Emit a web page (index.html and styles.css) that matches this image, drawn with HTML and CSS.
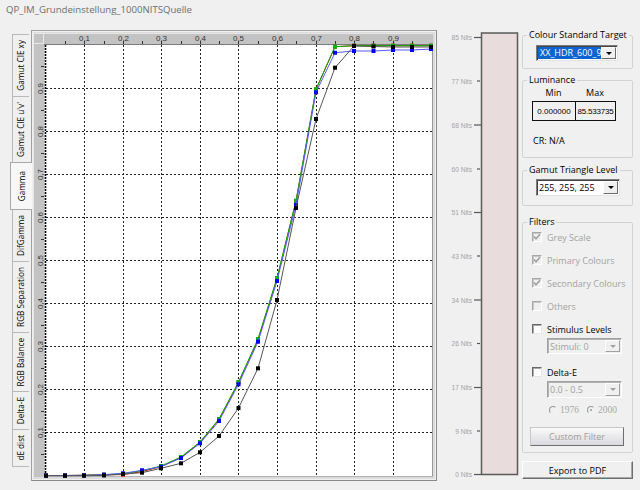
FILE: index.html
```html
<!DOCTYPE html>
<html>
<head>
<meta charset="utf-8">
<link rel="stylesheet" href="styles.css">
</head>
<body>
<div class="title">QP_IM_Grundeinstellung_1000NITSQuelle</div>
<div class="main">
  <div class="tabs">
    <div class="tab"><span>Gamut CIE xy</span></div>
    <div class="tab"><span>Gamut CIE u'v'</span></div>
    <div class="tab active"><span>Gamma</span></div>
    <div class="tab"><span>DifGamma</span></div>
    <div class="tab"><span>RGB Separation</span></div>
    <div class="tab"><span>RGB Balance</span></div>
    <div class="tab"><span>Delta-E</span></div>
    <div class="tab"><span>dE dist</span></div>
  </div>

  <div class="chart-page">
    <svg class="chart" width="402" height="447" viewBox="0 0 402 447">
      <defs>
        <marker id="mb" markerUnits="userSpaceOnUse" markerWidth="6" markerHeight="6" refX="3" refY="3"><rect x="1" y="1" width="4" height="4" fill="#0000ff"/></marker>
        <marker id="mg" markerUnits="userSpaceOnUse" markerWidth="6" markerHeight="6" refX="3" refY="3"><rect x="1" y="1" width="4" height="4" fill="#00b400"/></marker>
        <marker id="mr" markerUnits="userSpaceOnUse" markerWidth="6" markerHeight="6" refX="3" refY="3"><rect x="1" y="1" width="4" height="4" fill="#e00000"/></marker>
        <marker id="mk" markerUnits="userSpaceOnUse" markerWidth="6" markerHeight="6" refX="3" refY="3"><rect x="1" y="1" width="4" height="4" fill="#000"/></marker>
      </defs>
      <g transform="translate(-33,-32)">
        <rect x="33" y="32" width="402" height="447" fill="#dcdcdc"/>
        <!-- rulers -->
        <rect x="33" y="33" width="400" height="11" fill="#c3c3c3"/>
        <rect x="33" y="33" width="11" height="444" fill="#c3c3c3"/>
        <rect x="33.5" y="33.5" width="10" height="10" fill="none" stroke="#e8e8e8"/>
        <line x1="44" y1="33.5" x2="433" y2="33.5" stroke="#e6e6e6"/>
        <line x1="33.5" y1="44" x2="33.5" y2="477" stroke="#e6e6e6"/>
        <!-- plot -->
        <rect x="45" y="44" width="387" height="432" fill="#fff"/>
        <line x1="44" y1="44.5" x2="433" y2="44.5" stroke="#7a7a7a"/>
        <line x1="432.5" y1="44" x2="432.5" y2="477" stroke="#9a9a9a"/>
        <line x1="44" y1="476.5" x2="433" y2="476.5" stroke="#b4b4b4"/>

        <g class="tick" stroke="#333" stroke-width="1">
          <line x1="65.5" y1="41" x2="65.5" y2="44"/>
          <line x1="104.5" y1="41" x2="104.5" y2="44"/>
          <line x1="142.5" y1="41" x2="142.5" y2="44"/>
          <line x1="181.5" y1="41" x2="181.5" y2="44"/>
          <line x1="219.5" y1="41" x2="219.5" y2="44"/>
          <line x1="258.5" y1="41" x2="258.5" y2="44"/>
          <line x1="296.5" y1="41" x2="296.5" y2="44"/>
          <line x1="335.5" y1="41" x2="335.5" y2="44"/>
          <line x1="373.5" y1="41" x2="373.5" y2="44"/>
          <line x1="412.5" y1="41" x2="412.5" y2="44"/>
          <line x1="84.5" y1="41" x2="84.5" y2="44"/>
          <line x1="123.5" y1="41" x2="123.5" y2="44"/>
          <line x1="161.5" y1="41" x2="161.5" y2="44"/>
          <line x1="200.5" y1="41" x2="200.5" y2="44"/>
          <line x1="238.5" y1="41" x2="238.5" y2="44"/>
          <line x1="277.5" y1="41" x2="277.5" y2="44"/>
          <line x1="316.5" y1="41" x2="316.5" y2="44"/>
          <line x1="354.5" y1="41" x2="354.5" y2="44"/>
          <line x1="393.5" y1="41" x2="393.5" y2="44"/>

          <line x1="41" y1="454.5" x2="44" y2="454.5"/>
          <line x1="41" y1="411.5" x2="44" y2="411.5"/>
          <line x1="41" y1="368.5" x2="44" y2="368.5"/>
          <line x1="41" y1="325.5" x2="44" y2="325.5"/>
          <line x1="41" y1="282.5" x2="44" y2="282.5"/>
          <line x1="41" y1="239.5" x2="44" y2="239.5"/>
          <line x1="41" y1="196.5" x2="44" y2="196.5"/>
          <line x1="41" y1="153.5" x2="44" y2="153.5"/>
          <line x1="41" y1="110.5" x2="44" y2="110.5"/>
          <line x1="41" y1="66.5" x2="44" y2="66.5"/>
        </g>

        <g class="rlabel">
          <text x="84.5" y="41">0,1</text>
          <text x="123.5" y="41">0,2</text>
          <text x="161.5" y="41">0,3</text>
          <text x="200.5" y="41">0,4</text>
          <text x="238.5" y="41">0,5</text>
          <text x="277.5" y="41">0,6</text>
          <text x="316.5" y="41">0,7</text>
          <text x="354.5" y="41">0,8</text>
          <text x="393.5" y="41">0,9</text>
          <text transform="translate(42.5,88.5) rotate(-90)">0,9</text>
          <text transform="translate(42.5,131.5) rotate(-90)">0,8</text>
          <text transform="translate(42.5,174.5) rotate(-90)">0,7</text>
          <text transform="translate(42.5,217.5) rotate(-90)">0,6</text>
          <text transform="translate(42.5,260.5) rotate(-90)">0,5</text>
          <text transform="translate(42.5,303.5) rotate(-90)">0,4</text>
          <text transform="translate(42.5,346.5) rotate(-90)">0,3</text>
          <text transform="translate(42.5,389.5) rotate(-90)">0,2</text>
          <text transform="translate(42.5,432.5) rotate(-90)">0,1</text>
        </g>

        <g class="grid" stroke="#222" stroke-width="1" stroke-dasharray="2 2">
          <line x1="84.5" y1="45" x2="84.5" y2="476"/>
          <line x1="123.5" y1="45" x2="123.5" y2="476"/>
          <line x1="161.5" y1="45" x2="161.5" y2="476"/>
          <line x1="200.5" y1="45" x2="200.5" y2="476"/>
          <line x1="238.5" y1="45" x2="238.5" y2="476"/>
          <line x1="277.5" y1="45" x2="277.5" y2="476"/>
          <line x1="316.5" y1="45" x2="316.5" y2="476"/>
          <line x1="354.5" y1="45" x2="354.5" y2="476"/>
          <line x1="393.5" y1="45" x2="393.5" y2="476"/>
          <line x1="46" y1="88.5" x2="432" y2="88.5"/>
          <line x1="46" y1="131.5" x2="432" y2="131.5"/>
          <line x1="46" y1="174.5" x2="432" y2="174.5"/>
          <line x1="46" y1="217.5" x2="432" y2="217.5"/>
          <line x1="46" y1="260.5" x2="432" y2="260.5"/>
          <line x1="46" y1="303.5" x2="432" y2="303.5"/>
          <line x1="46" y1="346.5" x2="432" y2="346.5"/>
          <line x1="46" y1="389.5" x2="432" y2="389.5"/>
          <line x1="46" y1="432.5" x2="432" y2="432.5"/>
        </g>
        <line x1="45.5" y1="45" x2="45.5" y2="476" stroke="#000" stroke-width="1.6" stroke-dasharray="2 1"/>

        <polyline class="curve" stroke="#e00000" marker-start="url(#mr)" marker-mid="url(#mr)" marker-end="url(#mr)"
          points="46,475.5 65,475.5 84,475.3 104,474.7 123,474.6 142,471.6 161,466.6 181,457.5 200,442.5 219,419.5 238.5,382.5 258,339.5 277,278.5 296,201 316,89.5 335,46.7 354,45.7 373.5,45.7 393,45.7 412,45.7 431,45.7"/>
        <polyline class="curve" stroke="#00b400" marker-start="url(#mg)" marker-mid="url(#mg)" marker-end="url(#mg)"
          points="46,475.5 65,475.5 84,475.3 104,474.7 123,473.8 142,470.8 161,466 181,457 200,442 219,419 238.5,382 258,339 277,278 296,200.7 316,89.3 335,46.7 354,45.7 373.5,45.7 393,45.7 412,45.7 431,45.7"/>
        <polyline class="curve" stroke="#5a5aff" marker-start="url(#mb)" marker-mid="url(#mb)" marker-end="url(#mb)"
          points="46,475.5 65,475.5 84,475.3 104,474.7 123,473.3 142,470.3 161,466.7 181,458 200,443.3 219,421 238.5,384.3 258,341.7 277,281 296,205 316,92.3 335,52.7 354,51 373.5,51 393,50 412,50 431,49"/>
        <polyline class="curve" stroke="#555" marker-start="url(#mk)" marker-mid="url(#mk)" marker-end="url(#mk)"
          points="46,475.7 65,475.7 84,475.7 104,475.5 123,474 142,472.7 161,468.3 181,463.3 200,452.3 219,436 238.5,408 258,368.3 277,300 296,208 316,119 335,67.7 354,46 373.5,46.5 393,47 412,47 431,47"/>
      </g>
    </svg>
  </div>

  <div class="nits">
    <svg width="83" height="450" viewBox="0 0 83 450">
      <g transform="translate(-437,-30)">
        <rect x="481.5" y="34" width="36" height="441.5" fill="#e8dcdc" stroke="#5a5a5a" stroke-width="1.5"/>
        <g stroke="#555" stroke-width="1.2">
          <line x1="474" y1="38.5" x2="481" y2="38.5"/>
          <line x1="477" y1="82" x2="480" y2="82"/>
          <line x1="474" y1="126" x2="481" y2="126"/>
          <line x1="477" y1="170" x2="480" y2="170"/>
          <line x1="474" y1="213.5" x2="481" y2="213.5"/>
          <line x1="477" y1="257" x2="480" y2="257"/>
          <line x1="474" y1="301" x2="481" y2="301"/>
          <line x1="477" y1="344.5" x2="480" y2="344.5"/>
          <line x1="474" y1="388.5" x2="481" y2="388.5"/>
          <line x1="477" y1="432" x2="480" y2="432"/>
          <line x1="474" y1="475.5" x2="481" y2="475.5"/>
        </g>
        <g class="nlabel">
          <text x="472" y="41">85 Nits</text>
          <text x="472" y="84.5">77 Nits</text>
          <text x="472" y="128.5">68 Nits</text>
          <text x="472" y="172.5">60 Nits</text>
          <text x="472" y="216">51 Nits</text>
          <text x="472" y="259.5">43 Nits</text>
          <text x="472" y="303.5">34 Nits</text>
          <text x="472" y="347">26 Nits</text>
          <text x="472" y="391">17 Nits</text>
          <text x="472" y="434.5">9 Nits</text>
          <text x="472" y="478">0 Nits</text>
        </g>
      </g>
    </svg>
  </div>

  <div class="side">
    <fieldset class="group g1">
      <legend>Colour Standard Target</legend>
      <div class="combo combo-target">
        <div class="combo-text"><span class="sel">XX_HDR_600_90</span></div>
        <div class="combo-btn"><span class="arrow"></span></div>
      </div>
    </fieldset>

    <fieldset class="group g2">
      <legend>Luminance</legend>
      <div class="lum-head"><span>Min</span><span>Max</span></div>
      <div class="lum-table"><span>0.000000</span><span>85.533735</span></div>
      <div class="cr">CR: N/A</div>
    </fieldset>

    <fieldset class="group g3">
      <legend>Gamut Triangle Level</legend>
      <div class="combo combo-level">
        <div class="combo-text">255, 255, 255</div>
        <div class="combo-btn"><span class="arrow"></span></div>
      </div>
    </fieldset>

    <fieldset class="group g4">
      <legend>Filters</legend>
      <div class="check disabled checked"><span class="box"><svg width="8" height="8" viewBox="0 0 8 8"><path d="M1 3.5 L3 5.8 L7 1.2" fill="none" stroke="#a0a0a0" stroke-width="1.6"/></svg></span>Grey Scale</div>
      <div class="check disabled checked"><span class="box"><svg width="8" height="8" viewBox="0 0 8 8"><path d="M1 3.5 L3 5.8 L7 1.2" fill="none" stroke="#a0a0a0" stroke-width="1.6"/></svg></span>Primary Colours</div>
      <div class="check disabled checked"><span class="box"><svg width="8" height="8" viewBox="0 0 8 8"><path d="M1 3.5 L3 5.8 L7 1.2" fill="none" stroke="#a0a0a0" stroke-width="1.6"/></svg></span>Secondary Colours</div>
      <div class="check disabled"><span class="box"></span>Others</div>
      <div class="check"><span class="box"></span>Stimulus Levels</div>
      <div class="combo combo-sub disabled">
        <div class="combo-text">Stimuli: 0</div>
        <div class="combo-btn"><span class="arrow"></span></div>
      </div>
      <div class="check check-de"><span class="box"></span>Delta-E</div>
      <div class="combo combo-sub combo-de disabled">
        <div class="combo-text">0.0 - 0.5</div>
        <div class="combo-btn"><span class="arrow"></span></div>
      </div>
      <div class="radios">
        <span class="radio"><span class="dot"></span>1976</span>
        <span class="radio"><span class="dot on"></span>2000</span>
      </div>
      <button class="btn btn-custom" type="button">Custom Filter</button>
    </fieldset>

    <button class="btn btn-export" type="button">Export to PDF</button>
  </div>
</div>
</body>
</html>
```

FILE: styles.css
```css
html, body {
  margin: 0;
  padding: 0;
}
body {
  width: 640px;
  height: 490px;
  overflow: hidden;
  background: #f0f0f0;
  font-family: "Open Sans", "Liberation Sans", sans-serif;
  font-size: 9px;
  color: #000;
}
.title {
  height: 29px;
  padding-left: 6px;
  line-height: 19px;
  font-size: 9.6px;
  color: #6e6e6e;
}
.main {
  display: flex;
  align-items: flex-start;
}

/* vertical tabs */
.tabs {
  width: 21px;
  margin-left: 10px;
  margin-top: 6px;
  display: flex;
  flex-direction: column;
}
.tab {
  margin-left: 2px;
  width: 17px;
  box-sizing: border-box;
  border: 1px solid #b9b9b9;
  border-right: none;
  margin-top: -1px;
  background: #f0f0f0;
  display: flex;
  align-items: center;
  justify-content: center;
  padding: 5px 0;
}
.tab span {
  writing-mode: vertical-rl;
  transform: rotate(180deg);
  font-size: 8.2px;
  line-height: 12px;
  white-space: nowrap;
}
.tab.active {
  margin-left: 0;
  width: 22px;
  margin-right: -1px;
  padding: 8px 0;
  background: #f7f7f7;
  border-color: #a8a8a8;
  position: relative;
  z-index: 1;
}

/* chart page */
.chart-page {
  margin-top: 1px;
  width: 406px;
  height: 451px;
  box-sizing: border-box;
  border: 1px solid #a0a0a0;
  border-right-color: #8a8a8a;
  border-bottom-color: #8a8a8a;
  padding: 1px;
}
.chart {
  display: block;
}
.curve {
  fill: none;
  stroke-width: 1;
}
.rlabel text {
  font-family: "Liberation Sans", sans-serif;
  font-size: 8px;
  fill: #333;
  text-anchor: middle;
}

/* nits scale */
.nits {
  width: 83px;
  margin-top: 0;
}
.nits svg {
  display: block;
}
.nlabel text {
  font-family: "Liberation Sans", sans-serif;
  font-size: 6.6px;
  fill: #a3a3a8;
  text-anchor: end;
}

/* right panel */
.side {
  width: 111px;
  margin-left: 2px;
  display: flex;
  flex-direction: column;
}
.group {
  margin: 0;
  padding: 0;
  min-width: 0;
  box-sizing: border-box;
  border: 1px solid #d3d3d3;
  border-radius: 2px;
}
.group legend {
  margin-left: 4px;
  padding: 0 2px;
  font-size: 9px;
  line-height: 12px;
}
.g1 { height: 40px; }
.g2 { height: 84px; margin-top: 5px; }
.g3 { height: 42px; margin-top: 6px; }
.g4 { height: 237px; margin-top: 10px; }

/* combos */
.combo {
  display: flex;
  box-sizing: border-box;
  border: 1px solid;
  border-color: #7a7a7a #e3e3e3 #e3e3e3 #7a7a7a;
  background: #fff;
  box-shadow: inset 1px 1px 0 #444;
}
.combo-text {
  flex: 1;
  overflow: hidden;
  white-space: nowrap;
  padding-left: 2px;
  display: flex;
  align-items: center;
  font-size: 9px;
}
.combo-btn {
  width: 13px;
  margin: 1px 1px 1px 0;
  background: #f0f0f0;
  border: 1px solid;
  border-color: #fff #6a6a6a #6a6a6a #fff;
  display: flex;
  align-items: center;
  justify-content: center;
}
.arrow {
  width: 0;
  height: 0;
  border-left: 3px solid transparent;
  border-right: 3px solid transparent;
  border-top: 3px solid #000;
}
.combo-target {
  width: 82px;
  height: 16px;
  margin: 4px 0 0 13px;
}
.combo-target .combo-text {
  padding-left: 1px;
}
.sel {
  background: #0a64d2;
  color: #fff;
  padding: 0 2px;
  line-height: 12px;
}
.combo-level {
  width: 84px;
  height: 17px;
  margin: 3px 0 0 13px;
}
.combo.disabled {
  background: #f0f0f0;
  border-color: #a0a0a0 #fff #fff #a0a0a0;
  box-shadow: inset 1px 1px 0 #b4b4b4;
  color: #a0a0a0;
}
.combo.disabled .arrow {
  border-top-color: #a0a0a0;
}
.combo.disabled .combo-btn {
  border-color: #fff #a0a0a0 #a0a0a0 #fff;
}
.combo-sub {
  width: 75px;
  height: 16px;
  margin: 2px 0 0 24px;
}
.combo-de {
  height: 17px;
}

/* luminance */
.lum-head {
  display: grid;
  grid-template-columns: 43px 40px;
  margin: 1px 0 0 9px;
  line-height: 11px;
  text-align: center;
}
.lum-table {
  display: grid;
  grid-template-columns: 42px 40px;
  margin: 3px 0 0 9px;
  width: 84px;
  height: 20px;
  box-sizing: border-box;
  border: 1px solid #111;
  border-width: 1.5px;
}
.lum-table span {
  display: flex;
  align-items: center;
  justify-content: center;
  font-family: "Liberation Sans", sans-serif;
  font-size: 8px;
  white-space: nowrap;
  overflow: hidden;
}
.lum-table span + span {
  border-left: 1px solid #111;
  letter-spacing: -0.2px;
}
.cr {
  margin: 14px 0 0 10px;
  line-height: 12px;
}

/* checks */
.check {
  display: flex;
  align-items: center;
  height: 14px;
  margin: 2px 0 0 9px;
  font-size: 9px;
}
.check + .check {
  margin-top: 9px;
}
.check .box {
  width: 10px;
  height: 10px;
  box-sizing: border-box;
  margin-right: 5px;
  background: #fff;
  border: 1px solid;
  border-color: #6a6a6a #e6e6e6 #e6e6e6 #6a6a6a;
  box-shadow: inset 1px 1px 0 #a8a8a8;
  display: flex;
  align-items: center;
  justify-content: center;
}
.check.disabled {
  color: #a3a3a3;
}
.check.disabled .box {
  background: #f0f0f0;
  border-color: #a8a8a8 #fff #fff #a8a8a8;
  box-shadow: inset 1px 1px 0 #c8c8c8;
}
.check-de {
  margin-top: 11px;
}
.radios {
  display: flex;
  margin: 6px 0 0 26px;
  height: 12px;
  align-items: center;
  font-family: "Liberation Serif", serif;
  font-size: 9.5px;
  color: #a8a8a8;
}
.radio {
  display: flex;
  align-items: center;
}
.radio + .radio {
  margin-left: 8px;
}
.dot {
  width: 8px;
  height: 8px;
  box-sizing: border-box;
  border-radius: 50%;
  border: 1px solid;
  border-color: #9a9a9a #f4f4f4 #f4f4f4 #9a9a9a;
  margin-right: 3px;
  display: flex;
  align-items: center;
  justify-content: center;
}
.dot.on::after {
  content: "";
  width: 2px;
  height: 2px;
  border-radius: 50%;
  background: #9a9a9a;
}

/* buttons */
.btn {
  font-family: "Open Sans", "Liberation Sans", sans-serif;
  font-size: 9px;
  padding: 0;
  box-sizing: border-box;
  display: block;
}
.btn-custom {
  width: 94px;
  height: 19px;
  margin: 11px 0 0 7px;
  color: #9c9c9c;
  background: linear-gradient(#fafafa, #d9d9df);
  border: 1px solid;
  border-color: #c8c8c8 #6e6e6e #6e6e6e #c8c8c8;
}
.btn-export {
  width: 111px;
  height: 18px;
  margin-top: 8px;
  color: #000;
  background: #f0f0f0;
  border: 1px solid;
  border-color: #fff #6e6e6e #6e6e6e #fff;
  box-shadow: inset -1px -1px 0 #a8a8a8;
}
```
